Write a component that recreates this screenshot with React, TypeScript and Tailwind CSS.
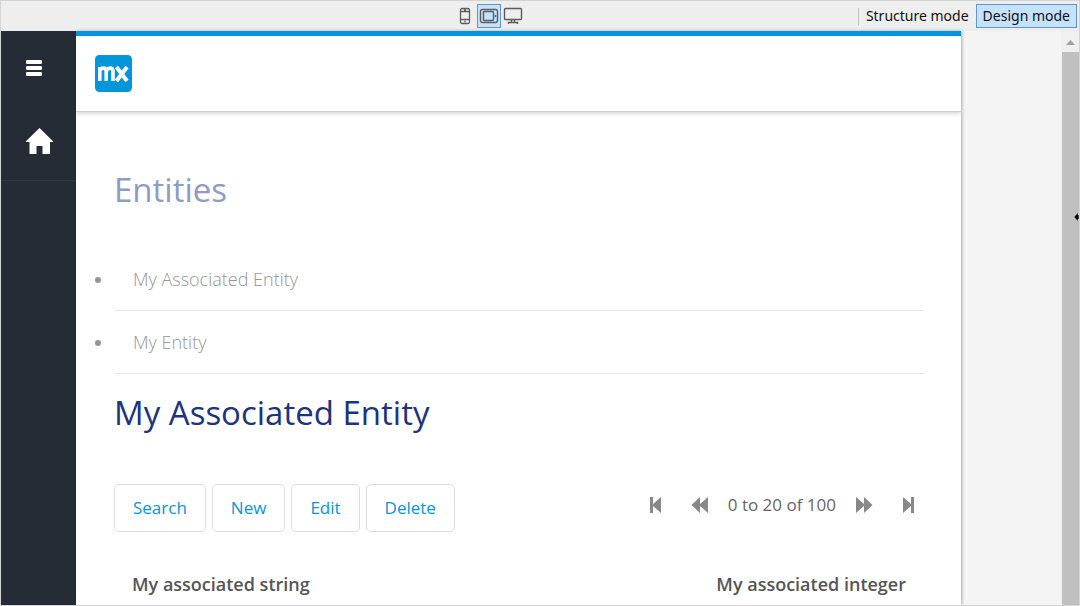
import React from "react";

function PhoneIcon() {
  return (
    <svg width="12" height="18" viewBox="0 0 12 18" fill="none" stroke="#5c5c5c" strokeWidth="1.3">
      <rect x="1.5" y="1.5" width="9" height="15" rx="1.5" />
      <path d="M1.5 4.5h9M1.5 12.5h9M5 3h2M5.3 14.5h1.4" />
    </svg>
  );
}

function TabletIcon() {
  return (
    <svg width="20" height="16" viewBox="0 0 20 16" className="shrink-0" fill="none" stroke="#5c5c5c" strokeWidth="1.4">
      <rect x="1.5" y="1.5" width="17" height="13" rx="2" />
      <rect x="4.5" y="3.5" width="10" height="9" rx="1" />
      <path d="M16.5 7v2" />
    </svg>
  );
}

function DesktopIcon() {
  return (
    <svg width="20" height="18" viewBox="0 0 20 18" fill="none" stroke="#5c5c5c" strokeWidth="1.4">
      <rect x="1.5" y="1.5" width="17" height="11" rx="1" />
      <path d="M8.5 12.5v3M11.5 12.5v3M5.5 17v-1.5h9V17" />
    </svg>
  );
}

function MenuIcon() {
  return (
    <svg width="16" height="16" viewBox="0 0 16 16" fill="#fff">
      <rect width="16" height="4" rx="1" />
      <rect y="6" width="16" height="4" rx="1" />
      <rect y="12" width="16" height="4" rx="1" />
    </svg>
  );
}

function HomeIcon() {
  return (
    <svg width="27" height="26" viewBox="0 0 27 26" fill="#fff">
      <path d="M13.5 0L27 13.2V14h-3v12h-7.5v-8h-6v8h-7V14H0v-.8z" />
    </svg>
  );
}

const pagerPaths = {
  first: "M3 1h3v7l8-7v16l-8-7v7H3z",
  previous: "M9 1v7l8-7v16l-8-7v7L.5 9z",
  next: "M1 1l8 7V1l8.5 8L9 17v-7l-8 7z",
  last: "M4 1l8 7V1h3v16h-3v-7l-8 7z",
};

function PagerButton({ kind, label }: { kind: keyof typeof pagerPaths; label: string }) {
  return (
    <button aria-label={label} className="flex h-12 w-8 items-center justify-center">
      <svg width="18" height="18" viewBox="0 0 18 18" fill="#888">
        <path d={pagerPaths[kind]} />
      </svg>
    </button>
  );
}

function Toolbar() {
  return (
    <header className="grid h-[30px] shrink-0 grid-cols-[1fr_auto_1fr] items-center bg-[#eee] pr-0.5">
      <span />
      <div className="flex items-center pr-25">
        <button aria-label="Phone" className="flex h-6 w-6 items-center justify-center">
          <PhoneIcon />
        </button>
        <button
          aria-label="Tablet"
          aria-pressed="true"
          className="flex h-6 w-6 items-center justify-center border border-[#6593cf] bg-[#c5e2ff]"
        >
          <TabletIcon />
        </button>
        <button aria-label="Desktop" className="flex h-6 w-6 items-center justify-center">
          <DesktopIcon />
        </button>
      </div>
      <div className="flex items-center justify-end font-['Noto_Sans',sans-serif] text-sm leading-[22px] whitespace-nowrap text-[#111]">
        <span className="h-[17px] w-px bg-[#c0c0c0]" />
        <button className="px-[7px]">Structure mode</button>
        <button aria-pressed="true" className="border border-[#6593cf] bg-[#c5e2ff] px-1.5">
          Design mode
        </button>
      </div>
    </header>
  );
}

function Sidebar() {
  return (
    <nav className="w-[75px] shrink-0 bg-[#252c36]">
      <div className="flex h-[73px] items-center pl-[25px]">
        <button aria-label="Menu">
          <MenuIcon />
        </button>
      </div>
      <a
        href="#home"
        aria-label="Home"
        className="flex h-[77px] items-center border-b border-[#303844] pb-0.5 pl-[25px]"
      >
        <HomeIcon />
      </a>
    </nav>
  );
}

function Scrollbar() {
  return (
    <div className="relative flex w-[18px] shrink-0 flex-col bg-[#f0f0f0] pl-px">
      <button aria-label="Scroll up" className="flex h-[21px] items-center justify-center pt-0.5">
        <svg width="9" height="5" viewBox="0 0 9 5" fill="#a0a0a0">
          <path d="M4.5 0L9 5H0z" />
        </svg>
      </button>
      <div className="flex-1 bg-[#c0c0c0]" />
      <svg className="absolute top-[181px] right-0" width="5" height="10" viewBox="0 0 5 10">
        <path d="M0 5l4-4.5V3h1v4H4v2.5z" fill="#000" stroke="#fff" strokeWidth="0.4" />
      </svg>
    </div>
  );
}

const entities = ["My Associated Entity", "My Entity"];
const actions = ["Search", "New", "Edit", "Delete"];

export default function App() {
  return (
    <div className="flex h-screen flex-col overflow-hidden border border-[#d4d4d4] font-['Open_Sans',sans-serif]">
      <Toolbar />
      <div className="flex min-h-0 flex-1 bg-[#f4f4f4]">
        <Sidebar />
        <main className="min-w-0 flex-1 overflow-hidden bg-white shadow-[1px_0_3px_rgba(0,0,0,0.3)]">
          <div className="flex h-[81px] items-center border-t-5 border-b border-t-[#0595db] border-b-[#d0d0d0] pl-[19px] shadow-[0_2px_4px_rgba(0,0,0,0.15)]">
            <svg width="37" height="37" viewBox="0 0 37 37" role="img" aria-label="mx">
              <rect width="37" height="37" rx="4.5" fill="#0595db" />
              <g fill="none" stroke="#fff" strokeWidth="3.6">
                <path d="M4.8 26V12M4.8 15.5q1.2-2.4 3.5-2.4q2.9 0 2.9 3.4V26M11.2 16q1.2-2.900 3.900-2.900q2.900 0 2.900 3.400V26" />
                <path d="M21.5 12L32 26M32 12L21.5 26" strokeWidth="4" />
              </g>
            </svg>
          </div>
          <div className="pt-14 pr-[37px] pl-[38px]">
            <h2 className="text-[33px] leading-11 text-[#8d9cc4]">Entities</h2>
            <ul className="mt-9 list-disc text-lg font-light text-[#959595]">
              {entities.map((name) => (
                <li key={name} className="border-b border-[#e8e8e8] py-[17px] pl-[19px] leading-7">
                  {name}
                </li>
              ))}
            </ul>
            <h1 className="mt-[17px] text-[33px] leading-11 text-[#1b3380]">My Associated Entity</h1>
            <div className="mt-[49px] flex items-start justify-between">
              <div className="flex gap-1.5">
                {actions.map((label) => (
                  <button
                    key={label}
                    className="h-12 rounded-[5px] border border-[#ddd] px-[18px] text-[17px] text-[#0595db]"
                  >
                    {label}
                  </button>
                ))}
              </div>
              <div className="-mt-[3px] flex items-center gap-3 text-[17px] text-[#666]">
                <PagerButton kind="first" label="First page" />
                <PagerButton kind="previous" label="Previous page" />
                <span className="whitespace-nowrap">0 to 20 of 100</span>
                <PagerButton kind="next" label="Next page" />
                <PagerButton kind="last" label="Last page" />
              </div>
            </div>
            <table className="mt-8 w-full text-lg text-[#555]">
              <thead>
                <tr>
                  <th className="px-[18px] pt-1.5 pb-3 text-left font-semibold">My associated string</th>
                  <th className="px-[18px] pt-1.5 pb-3 text-right font-semibold">My associated integer</th>
                </tr>
              </thead>
            </table>
          </div>
        </main>
        <div className="w-[100px] shrink-0" />
        <Scrollbar />
      </div>
    </div>
  );
}
